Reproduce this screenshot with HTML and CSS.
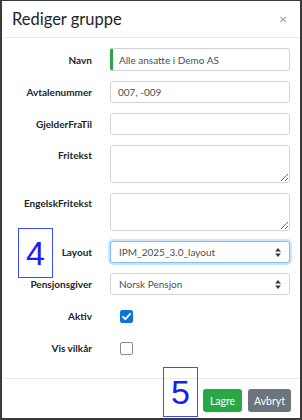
FILE: index.html
```html
<!DOCTYPE html>
<html lang="no">
<head>
    <meta charset="UTF-8">
    <meta name="viewport" content="width=device-width, initial-scale=1.0">
    <title>Rediger gruppe</title>
    <link rel="stylesheet" href="styles.css">
</head>
<body>
    <div class="modal-content">
        <div class="modal-header">
            <div class="modal-title">Rediger gruppe</div>
            <div class="close-btn">&times;</div>
        </div>

        <div class="modal-body">
            <div class="form-row">
                <label class="form-label">Navn</label>
                <input class="form-input valid" type="text" value="Alle ansatte i Demo AS">
            </div>
            <div class="form-row">
                <label class="form-label">Avtalenummer</label>
                <input class="form-input" type="text" value="007, -009">
            </div>
            <div class="form-row">
                <label class="form-label">GjelderFraTil</label>
                <input class="form-input" type="text" value="">
            </div>
            <div class="form-row tall">
                <label class="form-label">Fritekst</label>
                <textarea class="form-input textarea"></textarea>
            </div>
            <div class="form-row tall">
                <label class="form-label">EngelskFritekst</label>
                <textarea class="form-input textarea"></textarea>
            </div>
            <div class="form-row">
                <label class="form-label">Layout</label>
                <div class="form-input select focus">
                    <span>IPM_2025_3.0_layout</span>
                    <svg class="select-arrow" width="6" height="9" viewBox="0 0 6 9"><path d="M3 0 L6 3.5 H0 Z M3 9 L6 5.5 H0 Z" fill="#343a40"/></svg>
                </div>
            </div>
            <div class="form-row">
                <label class="form-label">Pensjonsgiver</label>
                <div class="form-input select">
                    <span>Norsk Pensjon</span>
                    <svg class="select-arrow" width="6" height="9" viewBox="0 0 6 9"><path d="M3 0 L6 3.5 H0 Z M3 9 L6 5.5 H0 Z" fill="#343a40"/></svg>
                </div>
            </div>
            <div class="form-row">
                <label class="form-label">Aktiv</label>
                <div class="checkbox checked">
                    <svg width="13" height="13" viewBox="0 0 13 13"><path d="M3 6.8 L5.4 9.2 L10.2 3.8" fill="none" stroke="#fff" stroke-width="1.8" stroke-linecap="round" stroke-linejoin="round"/></svg>
                </div>
            </div>
            <div class="form-row">
                <label class="form-label">Vis vilkår</label>
                <div class="checkbox"></div>
            </div>
        </div>

        <div class="modal-footer">
            <button class="btn btn-save">Lagre</button>
            <button class="btn btn-cancel">Avbryt</button>
        </div>

        <div class="marker marker-4">4</div>
        <div class="marker marker-5">5</div>
    </div>
</body>
</html>
```

FILE: styles.css
```css
* { margin: 0; padding: 0; box-sizing: border-box; }
body {
    font-family: Lato, "Noto Sans", sans-serif;
    background: #fff;
    color: #212529;
}
.modal-content {
    position: relative;
    width: 302px;
    height: 420px;
    border: 2px solid #3a3a3a;
    border-top-width: 1px;
    background: white;
    display: flex;
    flex-direction: column;
}
.modal-header {
    height: 37px;
    padding: 0 10px 0 10px;
    display: flex;
    align-items: center;
    justify-content: space-between;
    border-bottom: 1px solid #e9ecef;
}
.modal-title { font-size: 16.5px; line-height: 1; padding-top: 1px; }
.close-btn { font-size: 14px; color: #999; line-height: 1; margin-right: 3px; }
.modal-body {
    flex: 1;
    padding: 10px 10px 0 0;
    display: flex;
    flex-direction: column;
    gap: 10px;
}
.form-row {
    display: grid;
    grid-template-columns: 90px 180px;
    column-gap: 18px;
    align-items: center;
    min-height: 22px;
}
.form-row:first-child { min-height: 23px; }
.form-row.tall { align-items: start; }
.form-row.tall .form-label { padding-top: 4px; }
.form-label {
    text-align: right;
    font-size: 10px;
    font-weight: bold;
    color: #212529;
}
.form-input {
    height: 22px;
    width: 180px;
    border: 1px solid #ced4da;
    border-radius: 3px;
    padding: 0 7px;
    font-family: inherit;
    font-size: 10px;
    color: #495057;
    background: white;
    outline: none;
}
.form-input.valid { border-left: 3px solid #28a745; height: 23px; padding-left: 6px; }
.textarea { height: 38px; resize: vertical; padding: 3px 7px; }
.select {
    display: flex;
    align-items: center;
    justify-content: space-between;
    padding: 0 8px 0 8px;
}
.select.focus {
    border-color: #80bdff;
    box-shadow: 0 0 0 2px rgba(0,123,255,0.2);
}
.select-arrow { margin-top: 1px; }
.checkbox {
    width: 13px;
    height: 13px;
    margin-left: 10px;
    border: 1px solid #8a8a8a;
    border-radius: 2px;
    background: white;
}
.checkbox.checked { background: #0b75d8; border-color: #0b75d8; }
.checkbox svg { display: block; margin: -1px; }
.modal-footer {
    height: 40px;
    border-top: 1px solid #e9ecef;
    display: flex;
    justify-content: flex-end;
    align-items: flex-start;
    gap: 6px;
    padding: 10px 9px 0 0;
}
.btn {
    height: 23px;
    border: none;
    border-radius: 3px;
    color: white;
    font-family: inherit;
    font-size: 10.5px;
    padding: 0 4px;
}
.btn-save { background: #28a745; width: 39px; }
.btn-cancel { background: #6c757d; width: 43px; }
.marker {
    position: absolute;
    border: 1.5px solid #3b4cff;
    color: #1a1aff;
    font-family: "Liberation Sans", Arial, sans-serif;
    font-size: 34px;
    display: flex;
    justify-content: center;
    align-items: center;
}
.marker-4 { left: 16px; top: 227px; width: 35px; height: 50px; }
.marker-5 { left: 161px; top: 366px; width: 35px; height: 50px; }
```
